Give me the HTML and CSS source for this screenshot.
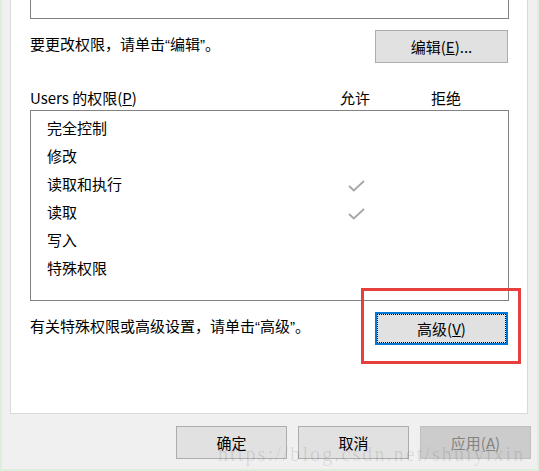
FILE: index.html
```html
<!DOCTYPE html>
<html lang="zh-CN">
<head>
<meta charset="utf-8">
<title>Users 的权限</title>
<link rel="stylesheet" href="styles.css">
</head>
<body>
<div class="window">
  <div class="panel">
    <div class="topbox"></div>
    <div class="row row-edit">
      <span class="note">要更改权限，请单击<span class="q">“</span>编辑<span class="q">”</span>。</span>
      <button class="btn btn-edit">编辑(<u>E</u>)...</button>
    </div>
    <div class="perm-head">
      <span>Users 的权限(<u>P</u>)</span>
      <span>允许</span>
      <span>拒绝</span>
    </div>
    <div class="perm-list">
      <div class="perm-row"><span>完全控制</span><span></span><span></span></div>
      <div class="perm-row"><span>修改</span><span></span><span></span></div>
      <div class="perm-row"><span>读取和执行</span><span class="check"><svg width="17" height="12" viewBox="0 0 17 12"><polyline points="1,6 5.8,10.5 16,1" fill="none" stroke="#a6a6a6" stroke-width="1.8"/></svg></span><span></span></div>
      <div class="perm-row"><span>读取</span><span class="check"><svg width="17" height="12" viewBox="0 0 17 12"><polyline points="1,6 5.8,10.5 16,1" fill="none" stroke="#a6a6a6" stroke-width="1.8"/></svg></span><span></span></div>
      <div class="perm-row"><span>写入</span><span></span><span></span></div>
      <div class="perm-row"><span>特殊权限</span><span></span><span></span></div>
    </div>
    <div class="row row-adv">
      <span class="note">有关特殊权限或高级设置，请单击<span class="q">“</span>高级<span class="q">”</span>。</span>
      <div class="adv-wrap">
        <button class="btn btn-adv">高级(<u>V</u>)</button>
        <div class="highlight"></div>
      </div>
    </div>
  </div>
  <div class="footer">
    <button class="btn btn-foot">确定</button>
    <button class="btn btn-foot">取消</button>
    <button class="btn btn-foot btn-disabled">应用(<u>A</u>)</button>
  </div>
  <div class="watermark">https://blog.csdn.net/shuiyixin</div>
</div>
</body>
</html>
```
FILE: styles.css
```css
html, body {
  margin: 0;
  padding: 0;
}
body {
  width: 539px;
  height: 471px;
  overflow: hidden;
  background: #f0f0f0;
  font-family: "Noto Sans CJK SC", "Noto Sans", sans-serif;
  font-size: 15px;
  color: #000;
}
.window {
  position: relative;
  box-sizing: border-box;
  width: 539px;
  height: 471px;
  border-left: 2px solid #dcefdc;
  border-right: 2px solid #dcefdc;
  border-bottom: 2px solid #dcefdc;
  padding-left: 8px;
  background: #f0f0f0;
}
.panel {
  box-sizing: border-box;
  width: 518px;
  background: #fff;
  border: 1px solid #d9d9d9;
  border-top: none;
  padding: 0 18px 68px 19px;
}
.topbox {
  box-sizing: border-box;
  height: 19px;
  border: 1px solid #828282;
  border-top: none;
}
.row {
  display: flex;
  justify-content: space-between;
  align-items: flex-start;
  margin-top: 11px;
  height: 33px;
}
.note {
  line-height: 27px;
  white-space: nowrap;
}
.q {
  font-family: "Liberation Sans", sans-serif;
}
.btn {
  box-sizing: border-box;
  height: 33px;
  margin: 0;
  padding: 0;
  background: #e1e1e1;
  border: 1px solid #adadad;
  font-family: "Noto Sans CJK SC", "Noto Sans", sans-serif;
  font-size: 15px;
  color: #000;
  line-height: 1;
}
.btn-edit {
  width: 133px;
  margin-right: 1px;
}
.perm-head {
  display: grid;
  grid-template-columns: 310px 91px 1fr;
  margin-top: 23px;
  line-height: 24px;
}
.perm-list {
  box-sizing: border-box;
  height: 191px;
  border: 1px solid #828282;
  padding: 3px 0 0 16px;
}
.perm-row {
  display: grid;
  grid-template-columns: 293px 91px 1fr;
  height: 28px;
  line-height: 28px;
  align-items: center;
}
.check {
  display: flex;
  align-items: center;
  padding-left: 8px;
  padding-top: 3px;
  height: 28px;
  box-sizing: border-box;
}
.adv-wrap {
  position: relative;
  margin-right: 1px;
}
.btn-adv {
  width: 133px;
  border: 2px solid #0078d7;
  outline: 1px dotted #000;
  outline-offset: -3px;
}
.highlight {
  position: absolute;
  left: -14px;
  top: -24px;
  width: 160px;
  height: 76px;
  box-sizing: border-box;
  border: 3px solid #e6403e;
  pointer-events: none;
}
.footer {
  display: flex;
  justify-content: flex-end;
  gap: 11px;
  margin-top: 12px;
  padding-right: 6px;
}
.btn-foot {
  width: 111px;
}
.btn-disabled {
  background: #cccccc;
  border-color: #bfbfbf;
  color: #838383;
}
.watermark {
  position: absolute;
  left: 216px;
  top: 443px;
  font-family: "Liberation Serif", serif;
  font-size: 20px;
  line-height: 23px;
  letter-spacing: 2.1px;
  color: rgba(0, 0, 0, 0.1);
  white-space: nowrap;
  pointer-events: none;
}
```
